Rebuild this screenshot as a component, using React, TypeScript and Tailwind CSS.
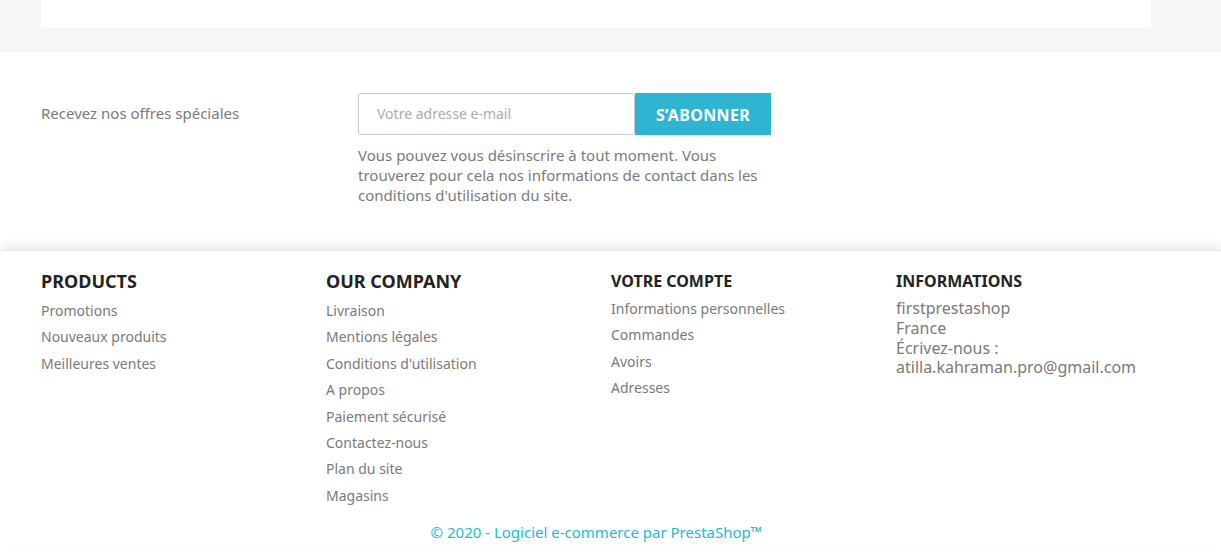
import React from "react";

const colA = ["Promotions", "Nouveaux produits", "Meilleures ventes"];
const colB = [
  "Livraison",
  "Mentions légales",
  "Conditions d'utilisation",
  "A propos",
  "Paiement sécurisé",
  "Contactez-nous",
  "Plan du site",
  "Magasins",
];
const colC = ["Informations personnelles", "Commandes", "Avoirs", "Adresses"];

function LinkList({ items }: { items: string[] }) {
  return (
    <ul className="flex flex-col">
      {items.map((t) => (
        <li key={t} className="text-[14px] leading-[26.4px] text-[#7a7a7a]">
          {t}
        </li>
      ))}
    </ul>
  );
}

export default function App() {
  return (
    <div className="w-[1221px] h-[556px] overflow-hidden bg-white" style={{ fontFamily: '"Noto Sans", sans-serif' }}>
      <div className="h-[52px] bg-[#f6f6f6] px-[41px]">
        <div className="w-[1110px] h-[28px] bg-white" />
      </div>

      <div className="relative bg-white h-[198px] px-[41px] pt-[41px]">
        <div className="flex">
          <div className="w-[317px] h-[42px] flex items-center pb-[2px] text-[15px] text-[#7a7a7a]">
            Recevez nos offres spéciales
          </div>
          <div className="flex flex-col">
            <div className="flex">
              <div className="w-[277px] h-[42px] border border-[#c8c8c8] rounded-[3px] flex items-center pl-[18px] pb-[1px] text-[14px] text-[#acacac]">
                Votre adresse e-mail
              </div>
              <div className="w-[136px] h-[42px] bg-[#2fb5d2] flex items-center justify-center pt-[2px] text-white font-bold text-[16px] tracking-[0.35px]">
                S’ABONNER
              </div>
            </div>
            <p className="w-[413px] mt-[10px] text-[15px] leading-[20px] text-[#7a7a7a]">
              Vous pouvez vous désinscrire à tout moment. Vous trouverez pour cela nos informations de contact dans les
              conditions d'utilisation du site.
            </p>
          </div>
        </div>
      </div>

      <div className="relative bg-white shadow-[0_-5px_9px_rgba(0,0,0,0.07)] border-t border-[#e6e6e6] px-[41px] pt-[18px]">
        <div className="grid grid-cols-[285px_285px_285px_285px]">
          <div>
            <div className="text-[18px] font-bold text-[#232323] leading-[24px] mb-[5px]">PRODUCTS</div>
            <LinkList items={colA} />
          </div>
          <div>
            <div className="text-[18px] font-bold text-[#232323] leading-[24px] mb-[5px]">OUR COMPANY</div>
            <LinkList items={colB} />
          </div>
          <div>
            <div className="text-[16px] font-bold text-[#232323] leading-[24px] mb-[3px]">VOTRE COMPTE</div>
            <LinkList items={colC} />
          </div>
          <div>
            <div className="text-[16px] font-bold text-[#232323] leading-[24px] mb-[6px]">INFORMATIONS</div>
            <div className="text-[16px] leading-[19.8px] text-[#7a7a7a]">
              firstprestashop
              <br />
              France
              <br />
              Écrivez-nous :
              <br />
              atilla.kahraman.pro@gmail.com
            </div>
          </div>
        </div>
        <div className="text-center text-[15px] text-[#24b9d7] mt-[12px] pr-[28px]">
          © 2020 - Logiciel e-commerce par PrestaShop™
        </div>
      </div>
    </div>
  );
}
